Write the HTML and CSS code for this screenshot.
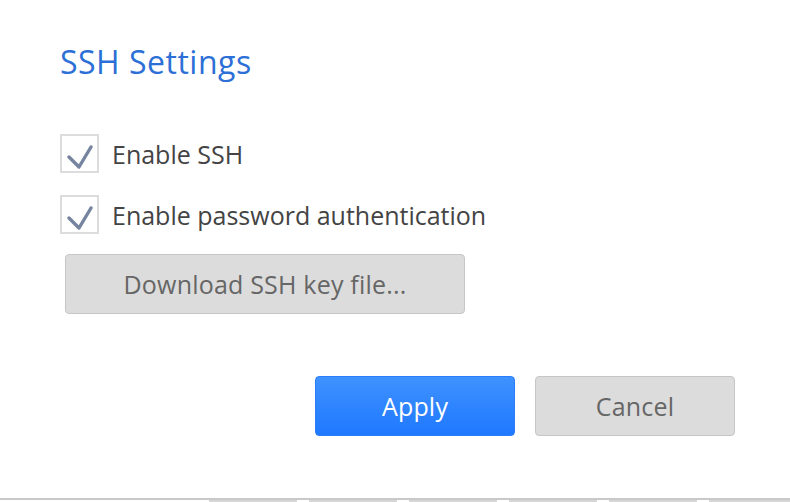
FILE: index.html
```html
<!DOCTYPE html>
<html lang="en">
<head>
<meta charset="utf-8">
<title>SSH Settings</title>
<link rel="stylesheet" href="styles.css">
</head>
<body>
<div class="page">
  <h1 class="title">SSH Settings</h1>
  <div class="options">
    <label class="option">
      <span class="box">
        <svg viewBox="0 0 39 39" width="39" height="39" aria-hidden="true">
          <path d="M9 23 L19 33 L31 13" fill="none" stroke="#76849f" stroke-width="3.4" stroke-linecap="round" stroke-linejoin="round"/>
        </svg>
      </span>
      <span class="label">Enable SSH</span>
    </label>
    <label class="option">
      <span class="box">
        <svg viewBox="0 0 39 39" width="39" height="39" aria-hidden="true">
          <path d="M9 23 L19 33 L31 13" fill="none" stroke="#76849f" stroke-width="3.4" stroke-linecap="round" stroke-linejoin="round"/>
        </svg>
      </span>
      <span class="label">Enable password authentication</span>
    </label>
  </div>
  <button class="btn btn-gray btn-download">Download SSH key file...</button>
  <div class="actions">
    <button class="btn btn-blue">Apply</button>
    <button class="btn btn-gray">Cancel</button>
  </div>
  <div class="footer">
    <div class="tabs">
      <span class="tab"></span><span class="tab"></span><span class="tab"></span><span class="tab"></span><span class="tab"></span><span class="tab"></span>
    </div>
  </div>
</div>
</body>
</html>
```
FILE: styles.css
```css
html, body {
  margin: 0;
  padding: 0;
  background: #ffffff;
}
body {
  font-family: "Open Sans", "Noto Sans", "Liberation Sans", sans-serif;
  overflow: hidden;
}
.page {
  width: 790px;
  height: 502px;
  box-sizing: border-box;
  padding: 42px 0 0 60px;
  display: flex;
  flex-direction: column;
}
.title {
  margin: 0;
  font-size: 32px;
  line-height: 40px;
  font-weight: 400;
  color: #2c6fd6;
  letter-spacing: 0.5px;
}
.options {
  margin-top: 52px;
  display: flex;
  flex-direction: column;
  gap: 22px;
}
.option {
  display: flex;
  align-items: center;
  height: 39px;
}
.box {
  width: 39px;
  height: 39px;
  box-sizing: border-box;
  border: 2px solid #dcdcdc;
  display: flex;
  align-items: center;
  justify-content: center;
  overflow: hidden;
}
.box svg {
  flex: none;
  filter: blur(0.5px);
}
.label {
  margin-left: 13px;
  font-size: 25px;
  line-height: 39px;
  padding-top: 2px;
  color: #444444;
}
.btn {
  font-family: inherit;
  font-size: 25px;
  letter-spacing: 0.2px;
  height: 60px;
  border-radius: 4px;
  box-sizing: border-box;
  padding: 0;
  cursor: pointer;
}
.btn-gray {
  background: #dcdcdc;
  border: 1px solid #c6c6c6;
  color: #666666;
}
.btn-blue {
  background: linear-gradient(#3f92ff, #1f78ff);
  border: 1px solid #2a7dfc;
  color: #ffffff;
}
.btn-download {
  margin-top: 20px;
  margin-left: 5px;
  width: 400px;
  align-self: flex-start;
}
.actions {
  margin-top: 62px;
  margin-right: 55px;
  display: flex;
  justify-content: flex-end;
  gap: 20px;
}
.actions .btn {
  width: 200px;
}
.footer {
  margin-top: auto;
  margin-left: -60px;
  border-top: 2px solid #c8c8c8;
  height: 2px;
}
.tabs {
  display: flex;
  gap: 12px;
  padding-left: 209px;
  height: 2px;
}
.tab {
  width: 88px;
  height: 2px;
  background: #d6d6d6;
  flex: none;
}
```
